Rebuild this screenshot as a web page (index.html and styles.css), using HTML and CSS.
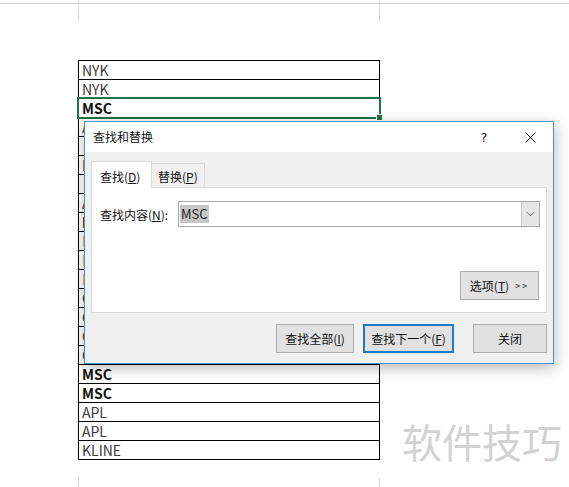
FILE: index.html
```html
<!DOCTYPE html>
<html lang="zh-CN">
<head>
<meta charset="utf-8">
<title>查找和替换</title>
<link rel="stylesheet" href="styles.css">
</head>
<body>
<div class="sheet">
  <div class="grid-top"><div class="stub"></div></div>

  <div class="table">
    <div class="row">NYK</div>
    <div class="row">NYK</div>
    <div class="row bold selected">MSC</div>
    <div class="row">APL</div>
    <div class="row"></div>
    <div class="row">EMC</div>
    <div class="row"></div>
    <div class="row">APL</div>
    <div class="row bold">MSC</div>
    <div class="row tan">HMM</div>
    <div class="row tan">HMM</div>
    <div class="row tan">HMM</div>
    <div class="row">COSCO</div>
    <div class="row">COSCO</div>
    <div class="row">COSCO</div>
    <div class="row">COSCO</div>
    <div class="row bold">MSC</div>
    <div class="row bold">MSC</div>
    <div class="row">APL</div>
    <div class="row">APL</div>
    <div class="row">KLINE</div>
  </div>

  <div class="stub stub-bottom"></div>

  <div class="dialog">
    <div class="titlebar">
      <span class="title">查找和替换</span>
      <span class="cap-btn help">?</span>
      <span class="cap-btn close">
        <svg width="11" height="11" viewBox="0 0 11 11"><path d="M0.5 0.5 L10.5 10.5 M10.5 0.5 L0.5 10.5" stroke="#111" stroke-width="1" fill="none"/></svg>
      </span>
    </div>
    <div class="dbody">
      <div class="tabs">
        <div class="tab active">查找(<u>D</u>)</div>
        <div class="tab">替换(<u>P</u>)</div>
      </div>
      <div class="panel">
        <div class="find-row">
          <span class="label">查找内容(<u>N</u>):</span>
          <div class="combo">
            <span class="combo-text"><span class="sel">MSC</span></span>
            <span class="dd">
              <svg width="9" height="6" viewBox="0 0 9 6"><path d="M0.5 0.8 L4.5 4.8 L8.5 0.8" stroke="#707070" stroke-width="1" fill="none"/></svg>
            </span>
          </div>
        </div>
        <div class="opts-row">
          <div class="btn opts">选项(<u>T</u>)<span class="arrows">&gt;&gt;</span></div>
        </div>
      </div>
      <div class="actions">
        <div class="btn b-all">查找全部(<u>I</u>)</div>
        <div class="btn b-next">查找下一个(<u>F</u>)</div>
        <div class="btn b-close">关闭</div>
      </div>
    </div>
  </div>

  <div class="watermark">软件技巧</div>
</div>
</body>
</html>
```

FILE: styles.css
```css
html, body {
  margin: 0;
  padding: 0;
  background: #fff;
}

.sheet {
  position: relative;
  width: 569px;
  height: 487px;
  overflow: hidden;
  background: #fff;
  font-family: "Noto Sans CJK SC", "Noto Sans", sans-serif;
}

.grid-top {
  height: 21px;
  background: linear-gradient(#d6d6d6, #d6d6d6) 0 3px / 100% 1px no-repeat;
}

.stub {
  box-sizing: border-box;
  margin-left: 78px;
  width: 302px;
  height: 21px;
  border-left: 1px solid #d6d6d6;
  border-right: 1px solid #d6d6d6;
}

.stub-bottom {
  margin-top: 18px;
  height: 9px;
}

.table {
  box-sizing: border-box;
  margin-top: 39px;
  margin-left: 78px;
  width: 302px;
  border: 1px solid #000;
  border-bottom: none;
}

.row {
  height: 18px;
  line-height: 19px;
  border-bottom: 1px solid #000;
  padding-left: 3px;
  font-size: 14px;
  color: #3a3a3a;
  white-space: nowrap;
}

.row.bold {
  font-weight: bold;
  color: #111;
}

.row.tan {
  color: #c8a07a;
}

.row.selected {
  position: relative;
}

.row.selected::after {
  content: "";
  position: absolute;
  left: -2px;
  right: -2px;
  top: -2px;
  bottom: -2px;
  border: 2px solid #217346;
}

.row.selected::before {
  content: "";
  position: absolute;
  right: -4px;
  bottom: -4px;
  width: 5px;
  height: 5px;
  background: #217346;
  border: 1px solid #fff;
  z-index: 1;
}

/* dialog */
.dialog {
  position: absolute;
  left: 84px;
  top: 121px;
  width: 470px;
  height: 243px;
  box-sizing: border-box;
  border: 1px solid #4a90cc;
  background: #f0f0f0;
  box-shadow: 1px 4px 14px rgba(0, 0, 0, 0.28);
  display: flex;
  flex-direction: column;
  font-size: 12px;
  color: #111;
  z-index: 5;
}

.titlebar {
  height: 30px;
  background: #fff;
  display: flex;
  align-items: center;
  padding-left: 8px;
}

.title {
  flex: 1;
  line-height: 30px;
}

.cap-btn {
  width: 46px;
  height: 30px;
  display: flex;
  align-items: center;
  justify-content: center;
}

.help {
  font-family: "DejaVu Sans", sans-serif;
  font-size: 13px;
  color: #222;
}

.dbody {
  flex: 1;
  padding: 9px 6px 9px 6px;
  display: flex;
  flex-direction: column;
}

.tabs {
  height: 26px;
  display: flex;
  align-items: flex-end;
}

.tab {
  box-sizing: border-box;
  height: 24px;
  width: 53px;
  border: 1px solid #d9d9d9;
  border-left: none;
  border-bottom: none;
  padding-left: 6px;
  line-height: 25px;
  background: #f0f0f0;
}

.tab.active {
  position: relative;
  width: 61px;
  height: 27px;
  margin-bottom: -1px;
  border-left: 1px solid #d9d9d9;
  padding-left: 8px;
  line-height: 29px;
  background: #fff;
  z-index: 1;
}

.panel {
  box-sizing: border-box;
  height: 126px;
  border: 1px solid #d9d9d9;
  background: #fff;
  padding: 13px 6px 12px 8px;
  display: flex;
  flex-direction: column;
  justify-content: space-between;
}

.find-row {
  display: flex;
  align-items: center;
  height: 26px;
}

.label {
  width: 78px;
  flex: none;
}

.combo {
  flex: 1;
  box-sizing: border-box;
  height: 26px;
  border: 1px solid #a9a9a9;
  display: flex;
  background: #fff;
}

.combo-text {
  flex: 1;
  padding-left: 1px;
  display: flex;
  align-items: center;
}

.sel {
  background: #c6c6c6;
  color: #222;
  font-size: 13px;
  line-height: 18px;
  padding: 0 1px;
}

.dd {
  width: 17px;
  background: #e6e6e6;
  border-left: 1px solid #c8c8c8;
  display: flex;
  align-items: center;
  justify-content: center;
}

.opts-row {
  display: flex;
  justify-content: flex-end;
}

.btn {
  box-sizing: border-box;
  height: 29px;
  border: 1px solid #adadad;
  background: #e1e1e1;
  display: flex;
  align-items: center;
  justify-content: center;
  white-space: nowrap;
}

.opts {
  width: 79px;
  margin-right: 1px;
}

.arrows {
  font-size: 9px;
  letter-spacing: 2px;
  margin-left: 6px;
}

.actions {
  margin-top: 11px;
  display: flex;
  justify-content: flex-end;
}

.b-all {
  width: 78px;
  margin-right: 9px;
}

.b-next {
  width: 91px;
  margin-right: 19px;
  border: 2px solid #1f78c8;
}

.b-close {
  width: 74px;
}

u {
  text-decoration: underline;
  text-underline-offset: 1px;
}

.watermark {
  position: absolute;
  left: 402px;
  top: 421px;
  font-size: 40px;
  line-height: 40px;
  color: #d2d2d2;
  white-space: nowrap;
}
```
